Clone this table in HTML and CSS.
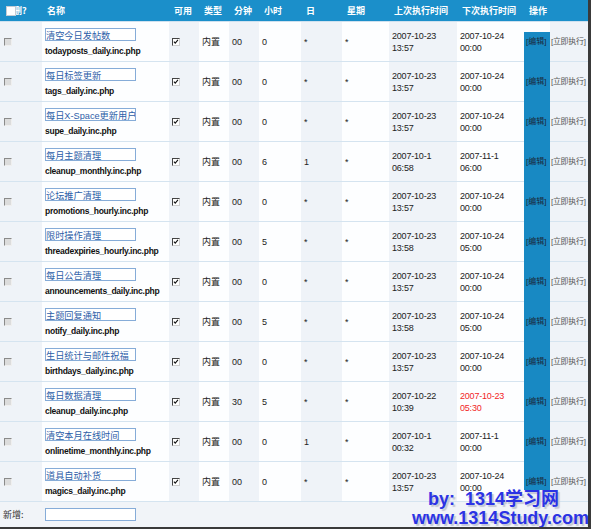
FILE: index.html
```html
<!DOCTYPE html>
<html>
<head>
<meta charset="utf-8">
<link rel="stylesheet" href="styles.css">
</head>
<body>
<div class="page">
<table class="grid">
<colgroup>
<col class="w-del"><col class="w-name"><col class="w-30"><col class="w-30"><col class="w-30"><col class="w-hour"><col class="w-day"><col class="w-week"><col class="w-last"><col class="w-next"><col class="w-edit"><col class="w-run">
</colgroup>
<thead>
<tr>
<th class="h-del"><span class="hcb"></span>删?</th><th>名称</th><th>可用</th><th>类型</th><th>分钟</th><th>小时</th><th>日</th><th>星期</th><th>上次执行时间</th><th>下次执行时间</th><th colspan="2">操作</th>
</tr>
</thead>
<tbody>
<tr class="first"><td class="sh"><span class="cb"></span></td><td class="name"><input class="ti" value="清空今日发帖数"><div class="fn">todayposts_daily.inc.php</div></td><td class="sh"><span class="cb on"><svg viewBox="0 0 8 8"><path d="M1.2 3.4 L3 5.6 L6.6 1.2"/></svg></span></td><td class="cn">内置</td><td class="sh">00</td><td>0</td><td class="sh">*</td><td>*</td><td class="sh dt">2007-10-23<br>13:57</td><td class="dt">2007-10-24<br>00:00</td><td class="ed">[编辑]</td><td class="sh run">[立即执行]</td></tr>
<tr><td class="sh"><span class="cb"></span></td><td class="name"><input class="ti" value="每日标签更新"><div class="fn">tags_daily.inc.php</div></td><td class="sh"><span class="cb on"><svg viewBox="0 0 8 8"><path d="M1.2 3.4 L3 5.6 L6.6 1.2"/></svg></span></td><td class="cn">内置</td><td class="sh">00</td><td>0</td><td class="sh">*</td><td>*</td><td class="sh dt">2007-10-23<br>13:57</td><td class="dt">2007-10-24<br>00:00</td><td class="ed">[编辑]</td><td class="sh run">[立即执行]</td></tr>
<tr><td class="sh"><span class="cb"></span></td><td class="name"><input class="ti" value="每日X-Space更新用户"><div class="fn">supe_daily.inc.php</div></td><td class="sh"><span class="cb on"><svg viewBox="0 0 8 8"><path d="M1.2 3.4 L3 5.6 L6.6 1.2"/></svg></span></td><td class="cn">内置</td><td class="sh">00</td><td>0</td><td class="sh">*</td><td>*</td><td class="sh dt">2007-10-23<br>13:57</td><td class="dt">2007-10-24<br>00:00</td><td class="ed">[编辑]</td><td class="sh run">[立即执行]</td></tr>
<tr><td class="sh"><span class="cb"></span></td><td class="name"><input class="ti" value="每月主题清理"><div class="fn">cleanup_monthly.inc.php</div></td><td class="sh"><span class="cb on"><svg viewBox="0 0 8 8"><path d="M1.2 3.4 L3 5.6 L6.6 1.2"/></svg></span></td><td class="cn">内置</td><td class="sh">00</td><td>6</td><td class="sh">1</td><td>*</td><td class="sh dt">2007-10-1<br>06:58</td><td class="dt">2007-11-1<br>06:00</td><td class="ed">[编辑]</td><td class="sh run">[立即执行]</td></tr>
<tr><td class="sh"><span class="cb"></span></td><td class="name"><input class="ti" value="论坛推广清理"><div class="fn">promotions_hourly.inc.php</div></td><td class="sh"><span class="cb on"><svg viewBox="0 0 8 8"><path d="M1.2 3.4 L3 5.6 L6.6 1.2"/></svg></span></td><td class="cn">内置</td><td class="sh">00</td><td>0</td><td class="sh">*</td><td>*</td><td class="sh dt">2007-10-23<br>13:57</td><td class="dt">2007-10-24<br>00:00</td><td class="ed">[编辑]</td><td class="sh run">[立即执行]</td></tr>
<tr><td class="sh"><span class="cb"></span></td><td class="name"><input class="ti" value="限时操作清理"><div class="fn">threadexpiries_hourly.inc.php</div></td><td class="sh"><span class="cb on"><svg viewBox="0 0 8 8"><path d="M1.2 3.4 L3 5.6 L6.6 1.2"/></svg></span></td><td class="cn">内置</td><td class="sh">00</td><td>5</td><td class="sh">*</td><td>*</td><td class="sh dt">2007-10-23<br>13:58</td><td class="dt">2007-10-24<br>05:00</td><td class="ed">[编辑]</td><td class="sh run">[立即执行]</td></tr>
<tr><td class="sh"><span class="cb"></span></td><td class="name"><input class="ti" value="每日公告清理"><div class="fn">announcements_daily.inc.php</div></td><td class="sh"><span class="cb on"><svg viewBox="0 0 8 8"><path d="M1.2 3.4 L3 5.6 L6.6 1.2"/></svg></span></td><td class="cn">内置</td><td class="sh">00</td><td>0</td><td class="sh">*</td><td>*</td><td class="sh dt">2007-10-23<br>13:57</td><td class="dt">2007-10-24<br>00:00</td><td class="ed">[编辑]</td><td class="sh run">[立即执行]</td></tr>
<tr><td class="sh"><span class="cb"></span></td><td class="name"><input class="ti" value="主题回复通知"><div class="fn">notify_daily.inc.php</div></td><td class="sh"><span class="cb on"><svg viewBox="0 0 8 8"><path d="M1.2 3.4 L3 5.6 L6.6 1.2"/></svg></span></td><td class="cn">内置</td><td class="sh">00</td><td>5</td><td class="sh">*</td><td>*</td><td class="sh dt">2007-10-23<br>13:58</td><td class="dt">2007-10-24<br>05:00</td><td class="ed">[编辑]</td><td class="sh run">[立即执行]</td></tr>
<tr><td class="sh"><span class="cb"></span></td><td class="name"><input class="ti" value="生日统计与邮件祝福"><div class="fn">birthdays_daily.inc.php</div></td><td class="sh"><span class="cb on"><svg viewBox="0 0 8 8"><path d="M1.2 3.4 L3 5.6 L6.6 1.2"/></svg></span></td><td class="cn">内置</td><td class="sh">00</td><td>0</td><td class="sh">*</td><td>*</td><td class="sh dt">2007-10-23<br>13:57</td><td class="dt">2007-10-24<br>00:00</td><td class="ed">[编辑]</td><td class="sh run">[立即执行]</td></tr>
<tr><td class="sh"><span class="cb"></span></td><td class="name"><input class="ti" value="每日数据清理"><div class="fn">cleanup_daily.inc.php</div></td><td class="sh"><span class="cb on"><svg viewBox="0 0 8 8"><path d="M1.2 3.4 L3 5.6 L6.6 1.2"/></svg></span></td><td class="cn">内置</td><td class="sh">30</td><td>5</td><td class="sh">*</td><td>*</td><td class="sh dt">2007-10-22<br>10:39</td><td class="dt due">2007-10-23<br>05:30</td><td class="ed">[编辑]</td><td class="sh run">[立即执行]</td></tr>
<tr><td class="sh"><span class="cb"></span></td><td class="name"><input class="ti" value="清空本月在线时间"><div class="fn">onlinetime_monthly.inc.php</div></td><td class="sh"><span class="cb on"><svg viewBox="0 0 8 8"><path d="M1.2 3.4 L3 5.6 L6.6 1.2"/></svg></span></td><td class="cn">内置</td><td class="sh">00</td><td>0</td><td class="sh">1</td><td>*</td><td class="sh dt">2007-10-1<br>00:32</td><td class="dt">2007-11-1<br>00:00</td><td class="ed">[编辑]</td><td class="sh run">[立即执行]</td></tr>
<tr class="last"><td class="sh"><span class="cb"></span></td><td class="name"><input class="ti" value="道具自动补货"><div class="fn">magics_daily.inc.php</div></td><td class="sh"><span class="cb on"><svg viewBox="0 0 8 8"><path d="M1.2 3.4 L3 5.6 L6.6 1.2"/></svg></span></td><td class="cn">内置</td><td class="sh">00</td><td>0</td><td class="sh">*</td><td>*</td><td class="sh dt">2007-10-23<br>13:57</td><td class="dt">2007-10-24<br>00:00</td><td class="ed">[编辑]</td><td class="sh run">[立即执行]</td></tr>
</tbody>
<tfoot>
<tr><td class="cn add">新增:</td><td colspan="11" class="addcell"><input class="ti"></td></tr>
</tfoot>
</table>
<div class="mark"><div class="m1">by:&nbsp; 1314学习网</div><div class="m2">www.1314Study.com</div></div>
</div>
</body>
</html>
```

FILE: styles.css
```css
html, body {
  margin: 0;
  padding: 0;
  background: #ffffff;
}
.page {
  position: relative;
  width: 588px;
  height: 527px;
  border-right: 3px solid #3a3a3a;
  border-bottom: 2px solid #3a3a3a;
  overflow: hidden;
  font-family: "Liberation Sans", "Noto Sans CJK SC", sans-serif;
  color: #222;
}
.grid {
  width: 588px;
  table-layout: fixed;
  border-collapse: separate;
  border-spacing: 0;
}
.w-del { width: 42px; }
.w-name { width: 127px; }
.w-30 { width: 30px; }
.w-hour { width: 42px; }
.w-day { width: 41px; }
.w-week { width: 47px; }
.w-last { width: 68px; }
.w-next { width: 67px; }
.w-edit { width: 26px; }
.w-run { width: 38px; }

.grid th {
  height: 21px;
  padding: 0 0 0 5px;
  background: #1b8fca;
  color: #ffffff;
  font-family: "Noto Sans CJK SC", sans-serif;
  font-weight: bold;
  font-size: 9px;
  text-align: left;
  white-space: nowrap;
  border-bottom: 1px solid #cfe1ef;
  overflow: hidden;
}
.grid th.h-del {
  position: relative;
  padding-left: 13px;
}
.hcb {
  position: absolute;
  left: 6px;
  top: 6px;
  width: 8px;
  height: 8px;
  background: #ffffff;
  border: 1px solid #c4ccd4;
}
.grid td {
  height: 39px;
  padding: 0 0 0 3px;
  vertical-align: middle;
  font-size: 9px;
  line-height: 12px;
  background: #fdfeff;
  border-bottom: 1px solid #d5e4f0;
  white-space: nowrap;
  overflow: hidden;
}
.grid td.sh {
  background: #eff3f8;
}
.grid td.name {
  vertical-align: top;
  padding-top: 6px;
  height: 33px;
}
.ti {
  display: block;
  width: 91px;
  height: 13px;
  box-sizing: border-box;
  margin: 0;
  padding: 0;
  border: 1px solid #86acd8;
  background: #ffffff;
  font-family: "Liberation Sans", "Noto Sans CJK SC", sans-serif;
  font-size: 9.2px;
  line-height: 11px;
  color: #2d5ea8;
  outline: none;
}
.fn {
  margin-top: 5px;
  font-size: 8.5px;
  line-height: 11px;
  font-weight: bold;
  letter-spacing: -0.25px;
  color: #111;
}
.cb {
  display: block;
  width: 6px;
  height: 6px;
  margin-left: 1px;
  background: #dcdcdc;
  border: 1px solid;
  border-color: #8a8a8a #efefef #efefef #8a8a8a;
}
.cb.on {
  background: #ffffff;
  border-color: #444 #cfcfcf #cfcfcf #444;
  margin-left: 0;
}
.cb svg {
  display: block;
  width: 6px;
  height: 6px;
}
.cb path {
  fill: none;
  stroke: #111;
  stroke-width: 1.4;
}
.cn {
  font-family: "Noto Sans CJK SC", sans-serif;
  font-size: 8px;
}
.grid td.dt {
  letter-spacing: -0.2px;
}
.grid td.due {
  color: #f21f1f;
}
.grid td.ed {
  background: #1889c3;
  border-bottom-color: #1889c3;
  font-family: "Liberation Sans", "Noto Sans CJK SC", sans-serif;
  font-size: 8px;
  color: #1a2a3a;
  padding-left: 2px;
}
.grid tr.first td.ed {
  background: linear-gradient(to bottom, #fdfeff 10px, #1889c3 10px);
}
.grid tr.last td.ed {
  background: linear-gradient(to bottom, #1889c3 28px, #eef2f6 28px);
  border-bottom-color: #d5e4f0;
}
.grid td.run {
  font-family: "Liberation Sans", "Noto Sans CJK SC", sans-serif;
  font-size: 8px;
  letter-spacing: -0.3px;
  color: #555;
  padding-left: 1px;
  overflow: visible;
}
.grid tfoot td {
  height: 25px;
  border-bottom: none;
  background: #f1f4f8;
}
.grid tfoot td.add {
  color: #333;
}
.grid tfoot td.addcell {
  padding-top: 0;
}
.mark {
  position: absolute;
  left: 412px;
  top: 490px;
  font-family: "Liberation Sans", "Noto Sans CJK SC", sans-serif;
  font-weight: bold;
  font-size: 18px;
  color: #2b33e4;
  text-shadow: 2px 2px 1px #c3c6d6;
  white-space: nowrap;
}
.m1 {
  height: 19px;
  line-height: 19px;
  padding-left: 16px;
}
.m2 {
  height: 19px;
  line-height: 19px;
}
```
